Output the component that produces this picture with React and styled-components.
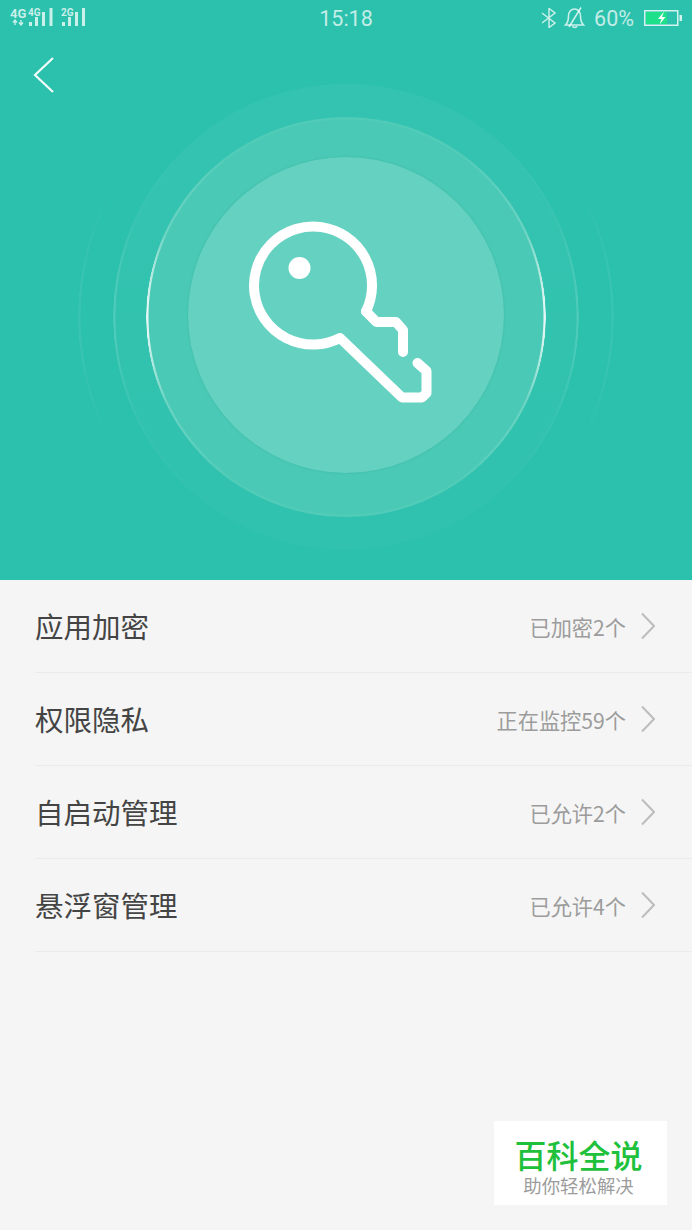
import styled, { createGlobalStyle } from "styled-components";

const GlobalStyle = createGlobalStyle`
  html, body {
    margin: 0;
    padding: 0;
    background: #f5f5f5;
    font-family: "Noto Sans CJK SC", "Noto Sans", sans-serif;
  }
`;

const Page = styled.div`
  position: relative;
  width: 692px;
  height: 1230px;
  overflow: hidden;
  background: #f5f5f5;
`;

const Hero = styled.header`
  position: relative;
  height: 580px;
  overflow: hidden;
  background: #2cc1ad;
  display: flex;
  flex-direction: column;
  align-items: center;
`;

const StatusBar = styled.div`
  width: 100%;
  height: 36px;
  flex: none;
  display: grid;
  grid-template-columns: 1fr auto 1fr;
  align-items: center;
  color: rgba(255, 255, 255, 0.72);
  font-family: "Roboto", sans-serif;
  font-size: 21.5px;
`;

const Signals = styled.svg`
  display: block;
`;

const StatusRight = styled.div`
  display: flex;
  align-items: center;
  justify-content: flex-end;
  padding-right: 10px;
`;

const BellIcon = styled.svg`
  margin-left: 6px;
`;

const Percent = styled.span`
  margin: 0 10px 0 8px;
`;

const BackButton = styled.button`
  position: absolute;
  left: 28px;
  top: 55px;
  padding: 0;
  border: 0;
  background: none;
  line-height: 0;
`;

const Circle = styled.div`
  position: relative;
  flex: none;
  width: ${(props) => props.$size}px;
  height: ${(props) => props.$size}px;
  border-radius: 50%;
  display: flex;
  align-items: center;
  justify-content: center;
  background: ${(props) => props.$fill};
`;

const OuterRing = styled(Circle)`
  margin-top: 13px;
`;

// thin rim that is bright on the left and right and fades out to the top and bottom
const RingLine = styled.div`
  position: absolute;
  inset: 0;
  border-radius: 50%;
  background: conic-gradient(
    rgba(255, 255, 255, ${(props) => props.$base}) 0deg,
    rgba(255, 255, 255, ${(props) => props.$base}) 35deg,
    rgba(255, 255, 255, ${(props) => props.$peak * 0.22}) 65deg,
    rgba(255, 255, 255, ${(props) => props.$peak}) 86deg,
    rgba(255, 255, 255, ${(props) => props.$peak}) 94deg,
    rgba(255, 255, 255, ${(props) => props.$peak * 0.22}) 115deg,
    rgba(255, 255, 255, ${(props) => props.$base}) 145deg,
    rgba(255, 255, 255, ${(props) => props.$base}) 215deg,
    rgba(255, 255, 255, ${(props) => props.$peak * 0.22}) 245deg,
    rgba(255, 255, 255, ${(props) => props.$peak}) 266deg,
    rgba(255, 255, 255, ${(props) => props.$peak}) 274deg,
    rgba(255, 255, 255, ${(props) => props.$peak * 0.22}) 295deg,
    rgba(255, 255, 255, ${(props) => props.$base}) 325deg,
    rgba(255, 255, 255, ${(props) => props.$base}) 360deg
  );
  mask: radial-gradient(closest-side, transparent calc(100% - 3px), #000 calc(100% - 2px), #000 calc(100% - 0.5px), transparent 100%);
`;

const InnerCircle = styled(Circle)`
  margin-bottom: 4px;
  box-shadow: 0 0 2px rgba(40, 160, 140, 0.5);
`;

const KeyIcon = styled.svg`
  display: block;
`;

const List = styled.ul`
  margin: 0;
  padding: 0;
  list-style: none;
`;

const Row = styled.li`
  box-sizing: border-box;
  height: 93px;
  margin-left: 35px;
  padding-right: 37px;
  border-bottom: 1px solid #ebebeb;
  display: flex;
  align-items: center;
`;

const RowTitle = styled.span`
  flex: 1;
  padding-bottom: 2px;
  font-size: 28.5px;
  color: #444;
`;

const RowValue = styled.span`
  font-size: 21.2px;
  color: #9c9c9c;
  margin-right: 15px;
`;

const Watermark = styled.aside`
  position: absolute;
  left: 494px;
  top: 1121px;
  width: 173px;
  height: 84px;
  background: #fff;
  display: flex;
  flex-direction: column;
  align-items: center;
  padding: 17px 4px 0 0;
  box-sizing: border-box;
`;

const WatermarkTitle = styled.div`
  font-size: 32px;
  line-height: 32px;
  font-weight: 500;
  color: #1fc13c;
`;

const WatermarkSub = styled.div`
  font-size: 18.4px;
  line-height: 22px;
  margin-top: 4px;
  color: #9c9c9c;
`;

const rows = [
  { title: "应用加密", value: "已加密2个" },
  { title: "权限隐私", value: "正在监控59个" },
  { title: "自启动管理", value: "已允许2个" },
  { title: "悬浮窗管理", value: "已允许4个" },
];

const SignalIcons = () => (
  <Signals width="96" height="36" viewBox="0 0 96 36" fill="#fff" fillOpacity="0.75">
    <text x="10" y="18" fontFamily="Roboto" fontWeight="700" fontSize="13">4G</text>
    <text x="28" y="16" fontFamily="Roboto" fontWeight="700" fontSize="10">4G</text>
    <text x="61" y="16" fontFamily="Roboto" fontWeight="700" fontSize="10">2G</text>
    <path d="M15 25v-4M13 22.500l2-2.500 2 2.500M21 20v4M19 22.500l2 2.500 2-2.500" stroke="#fff" strokeOpacity="0.75" strokeWidth="1.400" fill="none" />
    <rect x="29" y="22" width="3" height="4" />
    <rect x="35" y="17" width="3" height="9" />
    <rect x="42" y="12" width="3" height="14" />
    <rect x="49.500" y="8" width="3" height="18" />
    <rect x="62" y="22" width="3" height="4" />
    <rect x="68" y="17" width="3" height="9" />
    <rect x="75" y="12" width="3" height="14" />
    <rect x="82" y="8" width="3" height="18" />
  </Signals>
);

const BluetoothIcon = () => (
  <svg width="18" height="20" viewBox="0 0 18 20" fill="none" stroke="#fff" strokeOpacity="0.75" strokeWidth="1.500">
    <path d="M2 5l13 10-6 4.500V0.500l6 4.500L2 15" />
  </svg>
);

const MutedBell = () => (
  <BellIcon width="22" height="24" viewBox="0 0 22 24" fill="none" stroke="#fff" strokeOpacity="0.75" strokeWidth="1.600">
    <path d="M1.500 19h18c-2-2-3-4.500-3-9 0-4-2.500-7-6-7s-6 3-6 7c0 4.500-1 7-3 9z" />
    <path d="M8.500 20a2.400 2.400 0 0 0 4.500 0M5 21L17 1.500" />
  </BellIcon>
);

const BatteryIcon = () => (
  <svg width="38" height="16" viewBox="0 0 38 16">
    <rect x="0.750" y="0.750" width="33" height="14.500" fill="none" stroke="#fff" strokeOpacity="0.8" strokeWidth="1.500" />
    <rect x="2" y="2" width="21" height="12" fill="#1fe08a" />
    <rect x="35.500" y="5" width="2.500" height="6" fill="#fff" fillOpacity="0.8" />
    <path d="M20 1.500l-6 7.500h3.500L15.500 14.500l6-7.500H18z" fill="#fff" />
  </svg>
);

const Chevron = () => (
  <svg width="14" height="28" viewBox="0 0 14 28" fill="none" stroke="#bdbdbd" strokeWidth="2">
    <path d="M1 1.500L13 14 1 26.500" />
  </svg>
);

const App = () => {
  return (
    <Page>
      <GlobalStyle />
      <Hero>
        <StatusBar>
          <SignalIcons />
          <span>15:18</span>
          <StatusRight>
            <BluetoothIcon />
            <MutedBell />
            <Percent>60%</Percent>
            <BatteryIcon />
          </StatusRight>
        </StatusBar>
        <BackButton>
          <svg width="28" height="40" viewBox="0 0 28 40" fill="none" stroke="#fff" strokeOpacity="0.95" strokeWidth="2.200">
            <path d="M25 3L7 20l18 17" />
          </svg>
        </BackButton>
        <OuterRing $size={536} $fill="rgba(255,255,255,0.005)">
          <RingLine $peak={0.07} $base={0} />
          <Circle $size={466} $fill="linear-gradient(rgba(255,255,255,0.04), rgba(255,255,255,0.02))">
            <RingLine $peak={0.14} $base={0} />
            <Circle $size={400} $fill="#4acab6">
              <RingLine $peak={0.85} $base={0.04} />
              <InnerCircle $size={316} $fill="#65d1c1">
                <KeyIcon width="232" height="230" viewBox="0 0 232 230" fill="none" stroke="#fff" strokeWidth="10" strokeLinecap="round" strokeLinejoin="round">
                  <path d="M136 111.500A59 59 0 1 0 110 138L172 197.500H192L196.500 193V171L187.500 163" />
                  <path d="M136 111.500L146.500 122H166L173 130V152" />
                  <circle cx="69.500" cy="68" r="11" fill="#fff" stroke="none" />
                </KeyIcon>
              </InnerCircle>
            </Circle>
          </Circle>
        </OuterRing>
      </Hero>
      <List>
        {rows.map((row) => (
          <Row key={row.title}>
            <RowTitle>{row.title}</RowTitle>
            <RowValue>{row.value}</RowValue>
            <Chevron />
          </Row>
        ))}
      </List>
      <Watermark>
        <WatermarkTitle>百科全说</WatermarkTitle>
        <WatermarkSub>助你轻松解决</WatermarkSub>
      </Watermark>
    </Page>
  );
};

export default App;
